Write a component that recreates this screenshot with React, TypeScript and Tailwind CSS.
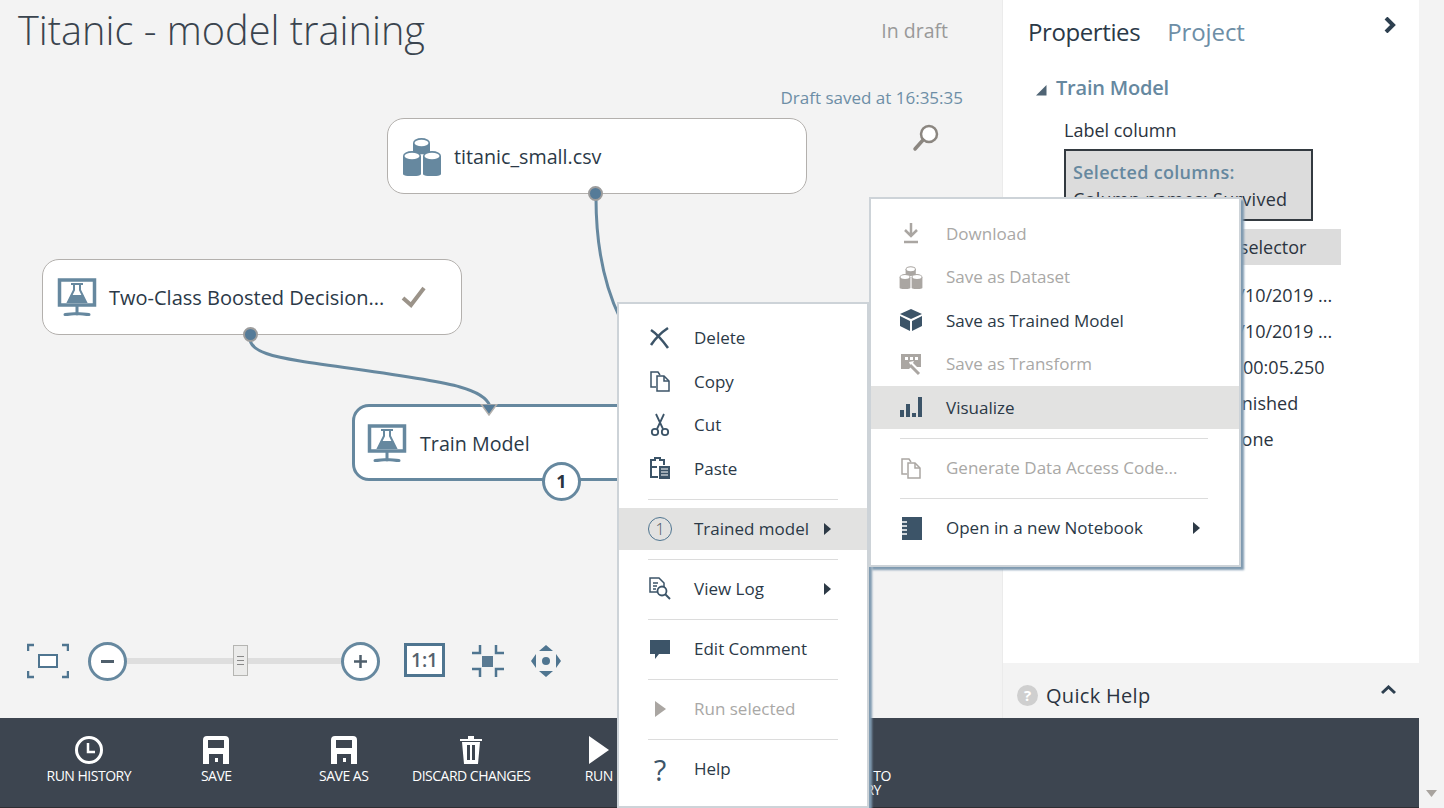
import type { ReactNode } from "react";

const BLUE = "#66889f";
const DARK = "#3c5468";
const OFF = "#aaa6a2";

const FlaskScreen = () => (
  <svg width="40" height="40" viewBox="0 0 40 40">
    <rect x="2.500" y="3" width="35" height="25" fill="none" stroke={BLUE} strokeWidth="3.500" />
    <path d="M14 7h12M17 7v6l-6 12h18l-6-12V7" fill="none" stroke={BLUE} strokeWidth="2" />
    <path d="M14 18h12l3 7H11z" fill={BLUE} />
    <path d="M20 29v8M8 37.500c4 0 8-1 12-1s8 1 12 1" fill="none" stroke={BLUE} strokeWidth="3" strokeLinecap="round" />
  </svg>
);

const Cylinder = ({ x, y, color, w = 17, h = 19 }: { x: number; y: number; color: string; w?: number; h?: number }) => (
  <g>
    <path d={`M${x} ${y + 5}v${h - 6}c0 3 ${w} 3 ${w} 0v-${h - 6}z`} fill={color} />
    <ellipse cx={x + w / 2} cy={y + 5} rx={w / 2} ry="5" fill={color} />
    <ellipse cx={x + w / 2} cy={y + 5} rx={w / 2 - 1.500} ry="3.300" fill="#fff" />
  </g>
);

const Database = ({ color = BLUE, size = 40 }: { color?: string; size?: number }) => (
  <svg width={size} height={size} viewBox="0 0 40 40">
    <Cylinder x={11} y={2} color={color} h={15} />
    <Cylinder x={1} y={15} color={color} w={18} h={24} />
    <Cylinder x={21} y={15} color={color} w={18} h={24} />
  </svg>
);

const Port = ({ className }: { className: string }) => (
  <span className={`absolute w-[15px] h-[15px] rounded-full bg-[#557b98] border-2 border-[#9c9c9c] ${className}`} />
);

const Arrow = ({ className }: { className: string }) => (
  <svg className={`absolute ${className}`} width="7" height="12" viewBox="0 0 7 12">
    <path d="M0 0l7 6-7 6z" fill="#2d3a46" />
  </svg>
);

const Icon = ({ children, w = 24, h = 24 }: { children: ReactNode; w?: number; h?: number }) => (
  <svg width={w} height={h} viewBox="0 0 24 24" className="shrink-0">
    {children}
  </svg>
);

const CopyGlyph = ({ color }: { color: string }) => (
  <g fill="none" stroke={color} strokeWidth="1.500">
    <path d="M8 18H3V3h7l2 3" />
    <path d="M9 7h7l5 5v10H9z" fill="#fff" />
    <path d="M16 7v5h5" />
  </g>
);

type RowProps = { icon: ReactNode; label: string; off?: boolean; hover?: boolean; sub?: boolean; tall?: boolean; arrow?: string };

const MenuRow = ({ icon, label, off, hover, sub, tall, arrow }: RowProps) => (
  <div
    className={`relative flex items-center shrink-0 ${tall ? "h-[42px]" : "h-[43.5px]"} ${sub ? "pl-[28px] gap-[23px]" : "pl-[29px] gap-[22px]"} ${hover ? "bg-[#e2e2e1]" : ""} ${off ? "text-[#a9a8a6]" : "text-[#2b3947]"}`}
  >
    <span className="w-[24px] h-[24px] flex items-center justify-center shrink-0">{icon}</span>
    <span className="whitespace-nowrap">{label}</span>
    {arrow && <Arrow className={arrow} />}
  </div>
);

const Sep = ({ sub }: { sub?: boolean }) => (
  <div className={`h-px mt-[9px] mb-[8px] shrink-0 bg-[#dcdcdc] ${sub ? "ml-[29px] w-[308px]" : "ml-[29px] w-[190px]"}`} />
);

const ToolItem = ({ icon, label, sub }: { icon?: ReactNode; label?: string; sub?: string }) => (
  <div className="w-[127.5px] shrink-0 flex flex-col items-center text-white text-[14px] leading-[14px] tracking-[-0.5px] whitespace-nowrap">
    <div className="h-[30px] mb-[4px] flex items-center justify-center">{icon}</div>
    <span>{label}</span>
    {sub && <span>{sub}</span>}
  </div>
);

const Floppy = () => (
  <svg width="28" height="30" viewBox="0 0 28 30">
    <path
      fillRule="evenodd"
      d="M5 1h18a4 4 0 0 1 4 4v24H1V5a4 4 0 0 1 4-4zM6 5v8h16V5zM7 19v10h14V19zM13 23h3v4h-3z"
      fill="#fff"
    />
  </svg>
);

export default function App() {
  return (
    <div className="relative w-[1444px] h-[808px] overflow-hidden flex bg-[#f3f3f3] font-['Open_Sans',sans-serif] text-[#2b3947]">
      <div className="w-[1419px] flex flex-col">
        <div className="h-[718px] flex">
          {/* Experiment canvas */}
          <div className="relative w-[1002px] bg-[#f3f3f3]">
            <div className="flex items-start justify-between pl-[18px] pr-[54px]">
              <h1 className="text-[39.700px] leading-[60px] font-light text-[#3a444e] whitespace-nowrap">Titanic - model training</h1>
              <span className="mt-[18px] text-[19.500px] leading-[26px] text-[#999]">In draft</span>
            </div>
            <div className="absolute right-[39px] top-[87px] text-[17px] leading-[22px] text-[#6d8ea6]">Draft saved at 16:35:35</div>
            <svg className="absolute left-[912px] top-[122px]" width="30" height="30" viewBox="0 0 30 30">
              <circle cx="17" cy="12" r="8" fill="#fff" stroke="#8b8680" strokeWidth="2.500" />
              <path d="M11 18l-8 9" stroke="#8b8680" strokeWidth="3.500" strokeLinecap="round" />
            </svg>

            <svg className="absolute left-0 top-0" width="1002" height="718" fill="none" stroke="#66889f" strokeWidth="3">
              <path d="M596 198C596 245 604 285 620 318" />
              <path d="M250 340C252 352 275 357 300 361C350 369 430 378 460 387C478 392 487 398 490 406" />
            </svg>

            <div className="absolute left-[387px] top-[118px] w-[420px] h-[76px] rounded-[17px] border border-[#b3b0ad] bg-white flex items-center pl-[14px] gap-[12px]">
              <Database />
              <span className="text-[19.700px] mt-[2px]">titanic_small.csv</span>
              <Port className="left-[200px] top-[67px]" />
            </div>

            <div className="absolute left-[42px] top-[259px] w-[420px] h-[76px] rounded-[17px] border border-[#b3b0ad] bg-white flex items-center pl-[14px] gap-[12px]">
              <FlaskScreen />
              <span className="text-[20px] whitespace-nowrap mt-[2px]">Two-Class Boosted Decision...</span>
              <svg className="ml-[5px]" width="26" height="24" viewBox="0 0 26 24">
                <path d="M2 13l8 7L23 3" fill="none" stroke="#9b9389" strokeWidth="4" />
              </svg>
              <Port className="left-[200px] top-[67px]" />
            </div>

            <div className="absolute left-[352px] top-[404px] w-[420px] h-[77px] rounded-[17px] border-[3px] border-[#66889f] bg-white flex items-center pl-[12px] gap-[13px]">
              <FlaskScreen />
              <span className="text-[19.700px] mt-[2px]">Train Model</span>
              <svg className="absolute left-[124px] top-[-3px]" width="20" height="12" viewBox="0 0 20 12">
                <path d="M2 0h16l-8 11z" fill="#557b98" stroke="#b3b0ad" strokeWidth="1.500" />
              </svg>
              <span className="absolute left-[187px] top-[55px] w-[39px] h-[39px] rounded-full border-[3px] border-[#66889f] bg-white flex items-center justify-center text-[18px] font-bold text-[#2b3440]">
                1
              </span>
            </div>

            {/* Zoom tools */}
            <div className="absolute left-[27px] top-[641px] h-[40px] flex items-center">
              <svg width="42" height="36" viewBox="0 0 42 36" fill="none" stroke="#4f7590" strokeWidth="2.500">
                <path d="M1 8V2h6M35 2h6v6M1 28v6h6M35 34h6v-6" />
                <rect x="12" y="12" width="18" height="12" fill="#fff" strokeWidth="2" />
              </svg>
              <div className="ml-[19px] w-[39px] h-[39px] rounded-full border-[3px] border-[#66889f] bg-white flex items-center justify-center shrink-0">
                <span className="w-[13px] h-[3px] bg-[#4f5f6c]" />
              </div>
              <div className="relative w-[214px] h-[6px] bg-[#dedede] shrink-0">
                <div className="absolute left-[106px] top-[-13px] w-[15px] h-[31px] bg-[#ebebea] border border-[#b5b5b2] flex flex-col items-center justify-center gap-[3px]">
                  <span className="w-[7px] h-px bg-[#888]" />
                  <span className="w-[7px] h-px bg-[#888]" />
                  <span className="w-[7px] h-px bg-[#888]" />
                </div>
              </div>
              <div className="w-[39px] h-[39px] rounded-full border-[3px] border-[#66889f] bg-white flex items-center justify-center shrink-0 text-[#4f5f6c]">
                <svg width="15" height="15" viewBox="0 0 15 15">
                  <path d="M7.500 1v13M1 7.500h13" stroke="#4f5f6c" strokeWidth="2.500" />
                </svg>
              </div>
              <div className="ml-[24px] mb-[2px] w-[41px] h-[34px] border-[3px] border-[#4f7590] bg-white flex items-center justify-center text-[19px] font-semibold text-[#55626e] shrink-0">
                1:1
              </div>
              <svg className="ml-[26px]" width="34" height="34" viewBox="0 0 34 34" fill="none" stroke="#4f7590" strokeWidth="2.500">
                <path d="M9 1v8H1M25 1v8h8M1 25h8v8M33 25h-8v8" />
                <rect x="11" y="12" width="11" height="11" fill="#5a7a92" stroke="none" />
              </svg>
              <svg className="ml-[25px]" width="32" height="34" viewBox="0 0 32 34" fill="#4f7590">
                <path d="M16 1l7 6H9zM16 33l-7-6h14zM1 17l5-7v14zM31 17l-5-7v14z" />
                <circle cx="16" cy="17" r="4" />
              </svg>
            </div>
          </div>

          {/* Properties panel */}
          <div className="w-[417px] flex flex-col bg-white border-l border-[#ebebeb]">
            <div className="flex-1 relative">
              <div className="flex items-center gap-[27px] pl-[25px] pt-[13px] text-[24px] leading-[38px]">
                <span className="tracking-[-0.4px]">Properties</span>
                <span className="text-[#6d8ea6] tracking-[-0.1px]">Project</span>
              </div>
              <svg className="absolute left-[381px] top-[17px]" width="12" height="16" viewBox="0 0 12 16">
                <path d="M2 1l7 7-7 7" fill="none" stroke="#2d3f4f" strokeWidth="4" />
              </svg>
              <div className="flex items-center mt-[23px] pl-[33px]">
                <svg width="11" height="11" viewBox="0 0 11 11" className="mt-[5px]">
                  <path d="M0 10.500h10.500V0z" fill="#4f6474" />
                </svg>
                <span className="ml-[9px] text-[20px] leading-[28px] font-semibold text-[#66889f] tracking-[-0.2px]">Train Model</span>
              </div>
              <div className="pl-[61px] mt-[15px] text-[18px] leading-[26px] text-[#2b3440]">
                <div>Label column</div>
                <div className="mt-[6px] w-[249px] h-[72px] border-2 border-[#333a40] bg-[#dcdcdc] pl-[7px] pt-[8px] leading-[27px] whitespace-nowrap">
                  <div className="font-semibold text-[#66889f] tracking-[0.3px]">Selected columns:</div>
                  <div className="tracking-[0.3px]">Column names: Survived</div>
                </div>
                <div className="mt-[8px] w-[277px] h-[36px] bg-[#dcdcdc] flex items-center justify-center pl-[8px] whitespace-nowrap">
                  Launch column selector
                </div>
                {/* the names in this list sit under the open menu */}
                <div className="mt-[17px] pl-[164px] flex flex-col gap-[10px] whitespace-nowrap">
                  <span>7/10/2019 ...</span>
                  <span>7/10/2019 ...</span>
                  <span>0:00:05.250</span>
                  <span>Finished</span>
                  <span>None</span>
                </div>
              </div>
            </div>
            <div className="h-[55px] shrink-0 bg-[#f3f3f3] relative flex items-center pl-[14px] pt-[10px] gap-[8px] text-[20px] font-medium text-[#2b3440]">
              <span className="w-[21px] h-[21px] rounded-full bg-[#cfcfcf] text-white text-[15px] font-bold flex items-center justify-center">?</span>
              <span className="tracking-[0.3px]">Quick Help</span>
              <svg className="absolute left-[378px] top-[22px]" width="15" height="10" viewBox="0 0 15 10">
                <path d="M1 8l6.500-6L14 8" fill="none" stroke="#2d3f4f" strokeWidth="3" />
              </svg>
            </div>
          </div>
        </div>

        {/* Command bar */}
        <div className="h-[89px] shrink-0 bg-[#3d4550] pl-[25px] pt-[17px] flex">
          <ToolItem
            label="RUN HISTORY"
            icon={
              <svg width="30" height="30" viewBox="0 0 30 30" fill="none" stroke="#fff" strokeWidth="3">
                <circle cx="15" cy="15" r="12.500" />
                <path d="M14 8v9h7" strokeWidth="2.500" />
              </svg>
            }
          />
          <ToolItem label="SAVE" icon={<Floppy />} />
          <ToolItem label="SAVE AS" icon={<Floppy />} />
          <ToolItem
            label="DISCARD CHANGES"
            icon={
              <svg width="24" height="30" viewBox="0 0 24 30" fill="#fff">
                <path d="M1 4h22v2H1zM9 1h6v3H9z" />
                <path fillRule="evenodd" d="M3 7h18l-2 22H5zM8 10v15h3V10zM13 10v15h3V10z" />
              </svg>
            }
          />
          <ToolItem
            label="RUN"
            icon={
              <svg width="22" height="30" viewBox="0 0 22 30">
                <path d="M1 1l20 14L1 29z" fill="#fff" />
              </svg>
            }
          />
          <ToolItem />
          <ToolItem label="PUBLISH TO" sub="GALLERY" />
        </div>
        <div className="h-px shrink-0 bg-[#2e2e33]" />
      </div>

      <div className="relative w-[25px] bg-[#f3f3f3]">
        <svg className="absolute left-[7px] top-[790px]" width="11" height="7" viewBox="0 0 11 7">
          <path d="M0 0h11L5.500 7z" fill="#a8a39e" />
        </svg>
      </div>

      {/* Context menu */}
      <div className="absolute left-[617px] top-[302px] w-[252px] h-[506px] bg-white border-2 border-[#cdd3d8] pt-[12px] text-[17px] shadow-[3px_3px_2px_#7f9ab0] flex flex-col">
        <MenuRow
          label="Delete"
          icon={
            <Icon>
              <path d="M3 4c6 4 12 11 17 18M20 2C14 6 7 13 3 19" fill="none" stroke={DARK} strokeWidth="2.500" />
            </Icon>
          }
        />
        <MenuRow label="Copy" icon={<Icon><CopyGlyph color={DARK} /></Icon>} />
        <MenuRow
          label="Cut"
          icon={
            <Icon>
              <g fill="none" stroke={DARK} strokeWidth="1.800">
                <path d="M8 1l7 15M16 1L9 16" />
                <circle cx="7" cy="19" r="3.200" />
                <circle cx="17" cy="19" r="3.200" />
              </g>
            </Icon>
          }
        />
        <MenuRow
          label="Paste"
          icon={
            <Icon>
              <path d="M9 11H3V4h4V2h5v2h4v5" fill="none" stroke={DARK} strokeWidth="2" />
              <path d="M3 10v11h7" fill="none" stroke={DARK} strokeWidth="2" />
              <rect x="11" y="10" width="11" height="13" fill={DARK} />
              <path d="M13 13h7M13 16h7M13 19h7" stroke="#fff" />
            </Icon>
          }
        />
        <Sep />
        <MenuRow
          tall
          hover
          label="Trained model"
          arrow="left-[205px] top-[15px]"
          icon={
            <span className="w-[24px] h-[24px] rounded-full border border-[#4f7590] flex items-center justify-center text-[16px] font-light text-[#4a5560]">1</span>
          }
        />
        <Sep />
        <MenuRow
          tall
          label="View Log"
          arrow="left-[205px] top-[15px]"
          icon={
            <Icon>
              <path d="M13 15H2V1h9l5 5v4" fill="none" stroke={DARK} strokeWidth="1.500" />
              <path d="M5 6h5M5 9h4M5 12h3" stroke={DARK} strokeWidth="1.500" />
              <circle cx="14" cy="14" r="4.500" fill="#fff" stroke={DARK} strokeWidth="1.800" />
              <path d="M17 17l5 5" stroke={DARK} strokeWidth="2" />
            </Icon>
          }
        />
        <Sep />
        <MenuRow
          tall
          label="Edit Comment"
          icon={
            <Icon>
              <path d="M2 3h20v14H11l-4 5v-5H2z" fill={DARK} />
            </Icon>
          }
        />
        <Sep />
        <MenuRow
          tall
          off
          label="Run selected"
          icon={
            <Icon>
              <path d="M7 4l11 8-11 8z" fill={OFF} />
            </Icon>
          }
        />
        <Sep />
        <MenuRow
          tall
          label="Help"
          icon={<span className="text-[29px] leading-none text-[#3c5468]">?</span>}
        />
      </div>

      {/* Trained model submenu */}
      <div className="absolute left-[869px] top-[197px] w-[372px] h-[370px] bg-white border-2 border-[#cdd3d8] pt-[12.500px] text-[17px] shadow-[3px_3px_2px_#7f9ab0] flex flex-col">
        <MenuRow
          sub
          off
          label="Download"
          icon={
            <Icon>
              <path d="M12 2v12M6 9l6 6 6-6" fill="none" stroke={OFF} strokeWidth="2.500" />
              <path d="M5 21h14" stroke={OFF} strokeWidth="2.500" />
            </Icon>
          }
        />
        <MenuRow sub off label="Save as Dataset" icon={<Database color={OFF} size={24} />} />
        <MenuRow
          sub
          label="Save as Trained Model"
          icon={
            <Icon>
              <path d="M12 1l11 5-11 5L1 6z" fill={DARK} />
              <path d="M1 8l10 5v10L1 18zM23 8l-10 5v10l10-5z" fill={DARK} />
            </Icon>
          }
        />
        <MenuRow
          sub
          off
          label="Save as Transform"
          icon={
            <Icon>
              <path d="M2 2h20v13h-4l-4-4 1-2-5 1 2 5-2 2H2z" fill={OFF} />
              <path d="M6 5h3v3H6zM11 5h3v3h-3zM16 5h3v3h-3z" fill="#fff" />
              <path d="M11 13l9 9" stroke={OFF} strokeWidth="3" />
            </Icon>
          }
        />
        <MenuRow
          sub
          hover
          label="Visualize"
          icon={
            <Icon>
              <path d="M1 15h4v7H1zM7 9h4v13H7zM13 18h4v4h-4zM19 2h4v20h-4z" fill={DARK} />
            </Icon>
          }
        />
        <Sep sub />
        <MenuRow sub off tall label="Generate Data Access Code..." icon={<Icon><CopyGlyph color={OFF} /></Icon>} />
        <Sep sub />
        <MenuRow
          sub
          tall
          label="Open in a new Notebook"
          arrow="left-[322px] top-[15px]"
          icon={
            <Icon>
              <rect x="3" y="1" width="20" height="23" fill={DARK} />
              <path d="M1 6h7M1 10h7M1 14h7M1 18h7" stroke="#fff" strokeWidth="1.500" />
            </Icon>
          }
        />
      </div>
    </div>
  );
}
